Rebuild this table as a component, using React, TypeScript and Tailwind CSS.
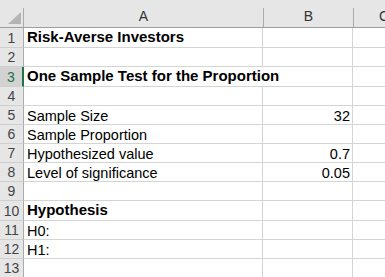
const rows = [
  { n: 1, a: "Risk-Averse Investors", bold: true },
  { n: 2 },
  { n: 3, a: "One Sample Test for the Proportion", bold: true, sel: true },
  { n: 4 },
  { n: 5, a: "Sample Size", b: "32" },
  { n: 6, a: "Sample Proportion" },
  { n: 7, a: "Hypothesized value", b: "0.7" },
  { n: 8, a: "Level of significance", b: "0.05" },
  { n: 9 },
  { n: 10, a: "Hypothesis", bold: true },
  { n: 11, a: "H0:" },
  { n: 12, a: "H1:" },
  { n: 13 },
];

export default function App() {
  return (
    <div className="w-[385px] h-[277px] overflow-hidden bg-white font-['Liberation_Sans',Arial,sans-serif] text-black">
      {/* column headers */}
      <div className="flex h-[28px] bg-[#e6e6e6] border-b border-[#9e9e9e]">
        <div className="w-[24px] shrink-0 flex items-end justify-end">
          <svg width="15" height="13" viewBox="0 0 15 13" className="mb-[2px] mr-[1px]">
            <polygon points="14,0 14,12 1,12" fill="#b4b4b4" />
          </svg>
          <div className="w-px h-[19px] bg-[#ababab]" />
        </div>
        <div className="w-[240px] shrink-0 flex items-end">
          <div className="flex-1 text-center text-[14px] leading-[16px] pb-[3px] text-[#333]">A</div>
          <div className="w-px h-[19px] bg-[#ababab]" />
        </div>
        <div className="w-[90px] shrink-0 flex items-end">
          <div className="flex-1 text-center text-[14px] leading-[16px] pb-[3px] text-[#333]">B</div>
          <div className="w-px h-[19px] bg-[#ababab]" />
        </div>
        <div className="flex-1 flex items-end">
          <div className="w-[60px] text-center text-[14px] leading-[16px] pb-[3px] text-[#333]">C</div>
        </div>
      </div>

      {rows.map((r) => (
        <div key={r.n} className={`flex ${r.bold ? "h-[20px]" : "h-[19px]"}`}>
          <div
            className={`w-[24px] shrink-0 flex items-end justify-center border-b border-[#cfcfcf] text-[14px] leading-[16px] pb-[1px] ${
              r.sel
                ? "bg-[#d2d2d2] text-[#217346] border-r-2 border-r-[#217346]"
                : "bg-[#e6e6e6] text-[#444] border-r border-r-[#ababab]"
            }`}
          >
            {r.n}
          </div>
          <div
            className={`w-[239px] shrink-0 flex items-end pl-[3px] border-b border-[#d4d4d4] whitespace-nowrap overflow-visible relative z-10 ${
              r.sel ? "" : "border-r"
            }`}
          >
            <span className={r.bold ? "font-bold text-[15px] leading-[16px] pb-[2px]" : "text-[14.5px] leading-[16px]"}>
              {r.a}
            </span>
          </div>
          <div className="w-[90px] shrink-0 flex items-end justify-end pr-[2px] border-b border-r border-[#d4d4d4]">
            <span className="text-[14.5px] leading-[16px]">{r.b}</span>
          </div>
          <div className="flex-1 border-b border-[#d4d4d4]" />
        </div>
      ))}
    </div>
  );
}
